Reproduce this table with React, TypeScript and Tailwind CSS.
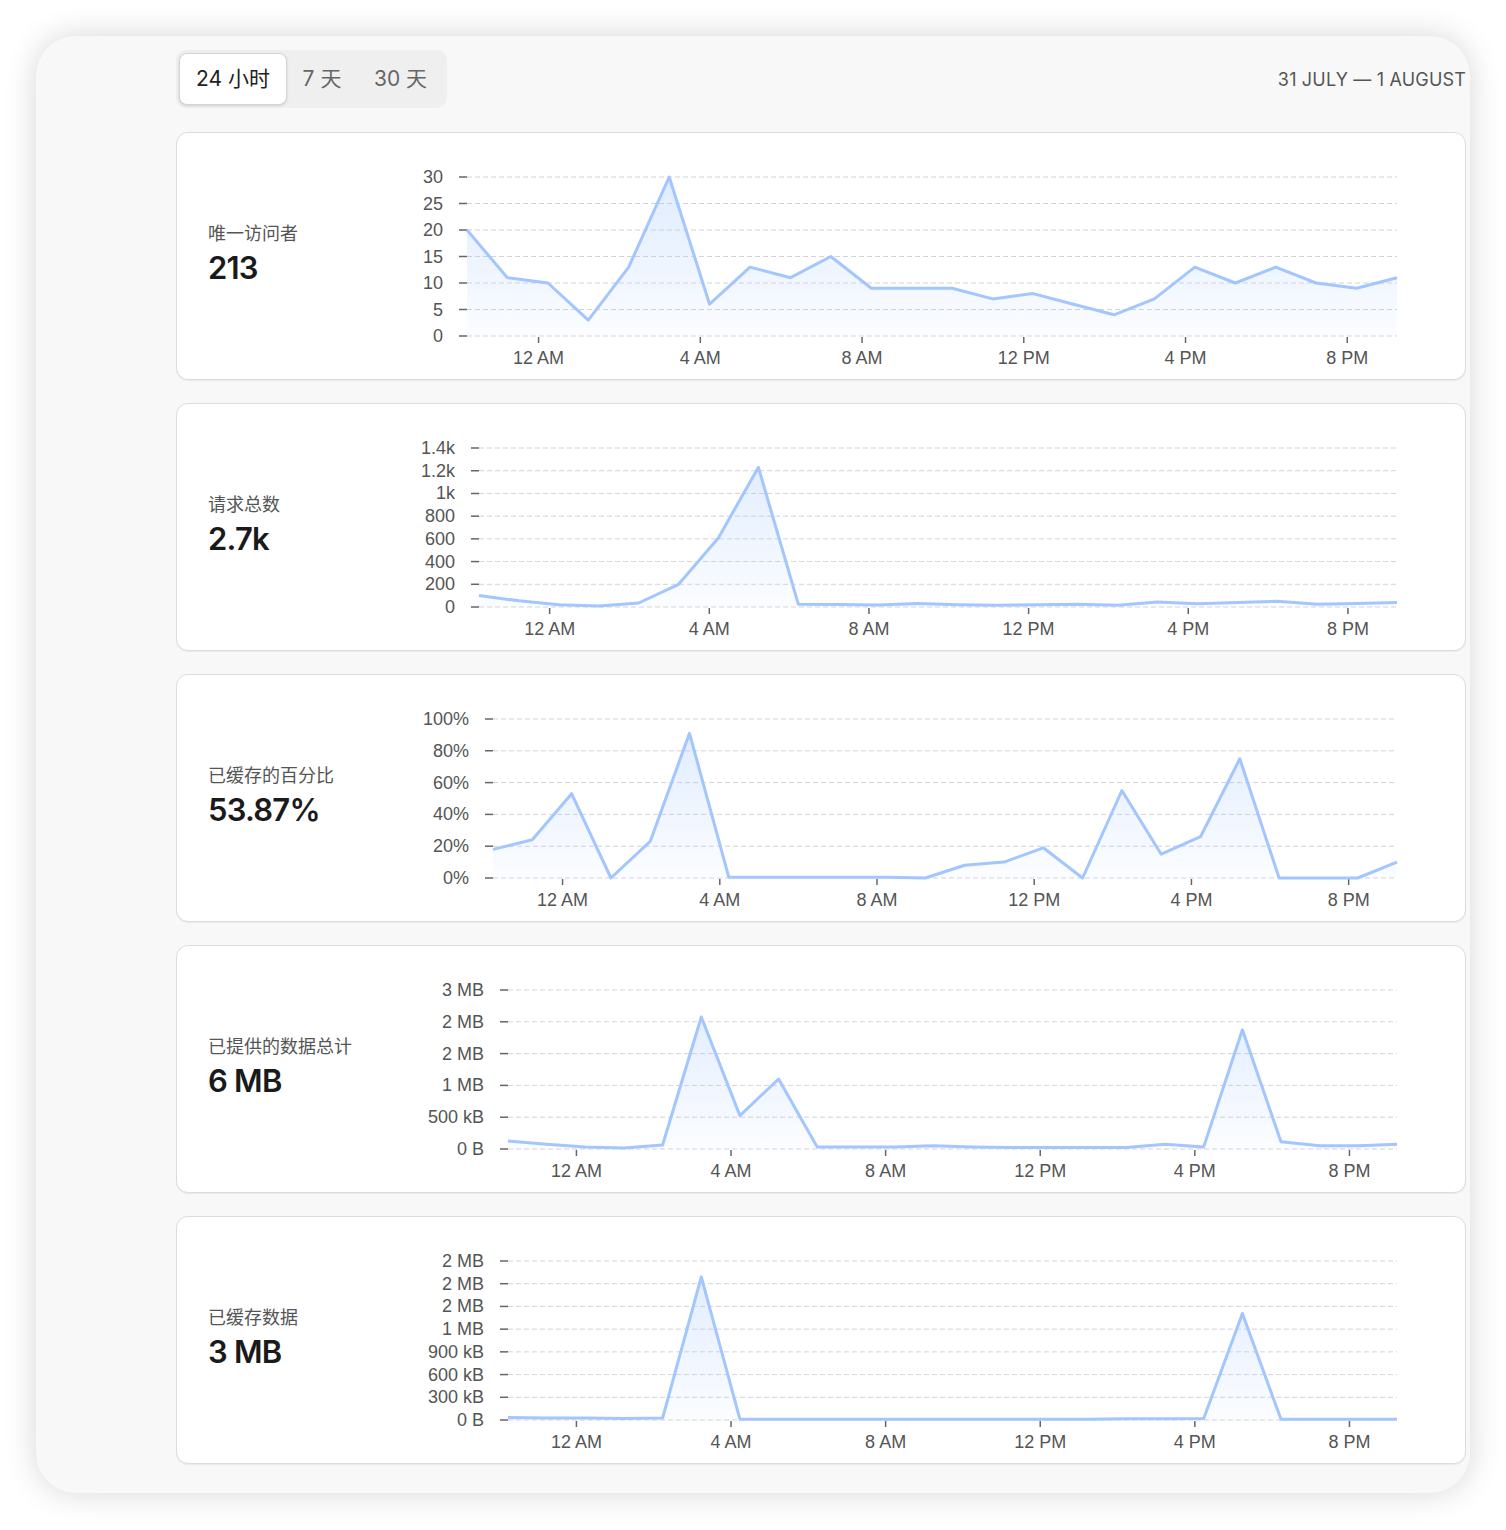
import React from "react";

type Metric = {
    label: string;
    value: string;
    plotLeft: number;
    yLabels: string[];
    data: number[];
    max: number;
};

const metrics: Metric[] = [
    {
        label: "唯一访问者",
        value: "213",
        plotLeft: 67,
        yLabels: ["30", "25", "20", "15", "10", "5", "0"],
        data: [20, 11, 10, 3, 13, 30, 6, 13, 11, 15, 9, 9, 9, 7, 8, 6, 4, 7, 13, 10, 13, 10, 9, 11],
        max: 30,
    },
    {
        label: "请求总数",
        value: "2.7k",
        plotLeft: 79,
        yLabels: ["1.4k", "1.2k", "1k", "800", "600", "400", "200", "0"],
        data: [100, 55, 20, 8, 35, 200, 610, 1230, 25, 22, 18, 30, 20, 15, 20, 25, 15, 45, 28, 40, 50, 25, 30, 40],
        max: 1400,
    },
    {
        label: "已缓存的百分比",
        value: "53.87%",
        plotLeft: 93,
        yLabels: ["100%", "80%", "60%", "40%", "20%", "0%"],
        data: [18, 24, 53, 0, 23, 91, 0.5, 0.5, 0.5, 0.5, 0.5, 0, 8, 10, 19, 0, 55, 15, 26, 75, 0, 0, 0, 10],
        max: 100,
    },
    {
        label: "已提供的数据总计",
        value: "6 MB",
        plotLeft: 108,
        yLabels: ["3 MB", "2 MB", "2 MB", "1 MB", "500 kB", "0 B"],
        data: [0.05, 0.03, 0.013, 0.006, 0.025, 0.83, 0.21, 0.44, 0.013, 0.013, 0.013, 0.02, 0.013, 0.01, 0.01, 0.01, 0.01, 0.03, 0.013, 0.75, 0.045, 0.02, 0.02, 0.03],
        max: 1,
    },
    {
        label: "已缓存数据",
        value: "3 MB",
        plotLeft: 108,
        yLabels: ["2 MB", "2 MB", "2 MB", "1 MB", "900 kB", "600 kB", "300 kB", "0 B"],
        data: [0.015, 0.012, 0.012, 0.01, 0.012, 0.9, 0.005, 0.005, 0.005, 0.005, 0.005, 0.005, 0.005, 0.005, 0.005, 0.005, 0.008, 0.008, 0.01, 0.67, 0.005, 0.005, 0.005, 0.005],
        max: 1,
    },
];

const xLabels = ["12 AM", "4 AM", "8 AM", "12 PM", "4 PM", "8 PM"];

const PLOT_RIGHT = 997;
const TOP = 44;
const BOTTOM = 203;

function Chart({ metric, id }: { metric: Metric; id: string }) {
    const { plotLeft, yLabels, data, max } = metric;
    const step = (PLOT_RIGHT - plotLeft) / (data.length - 1);
    const rowGap = (BOTTOM - TOP) / (yLabels.length - 1);

    const points = data.map((v, i) => {
        const x = plotLeft + i * step;
        const y = BOTTOM - (v / max) * (BOTTOM - TOP);
        return [x, y];
    });
    const line = points.map(([x, y], i) => `${i === 0 ? "M" : "L"}${x.toFixed(1)},${y.toFixed(1)}`).join(" ");
    const area = `${line} L${PLOT_RIGHT},${BOTTOM} L${plotLeft},${BOTTOM} Z`;

    return (
        <svg width="1065" height="246" className="shrink-0" style={{ fontFamily: "'Liberation Sans', Arial, sans-serif" }}>
            <defs>
                <linearGradient id={id} x1="0" y1={TOP} x2="0" y2={BOTTOM} gradientUnits="userSpaceOnUse">
                    <stop offset="0" stopColor="#a2c6fd" stopOpacity="0.35" />
                    <stop offset="1" stopColor="#a2c6fd" stopOpacity="0.04" />
                </linearGradient>
            </defs>

            {/* grid + y axis */}
            {yLabels.map((label, i) => {
                const y = TOP + i * rowGap;
                return (
                    <g key={i}>
                        <line x1={plotLeft} x2={PLOT_RIGHT} y1={y} y2={y} stroke="#d3d3d8" strokeWidth="1" strokeDasharray="5 3" />
                        <line x1={plotLeft - 8} x2={plotLeft} y1={y} y2={y} stroke="#666" strokeWidth="1.5" />
                        <text x={plotLeft - 24} y={y} textAnchor="end" dominantBaseline="central" fontSize="18" fill="#555">
                            {label}
                        </text>
                    </g>
                );
            })}

            {/* x axis */}
            {xLabels.map((label, i) => {
                const x = plotLeft + (1.77 + i * 4) * step;
                return (
                    <g key={label}>
                        <line x1={x} x2={x} y1={BOTTOM + 1} y2={BOTTOM + 7} stroke="#666" strokeWidth="1.5" />
                        <text x={x} y={BOTTOM + 22} textAnchor="middle" dominantBaseline="central" fontSize="18" fill="#555">
                            {label}
                        </text>
                    </g>
                );
            })}

            <path d={area} fill={`url(#${id})`} />
            <path d={line} fill="none" stroke="#a2c6fd" strokeWidth="3" strokeLinejoin="round" />
        </svg>
    );
}

function MetricCard({ metric, index }: { metric: Metric; index: number }) {
    return (
        <div className="flex h-[248px] overflow-hidden rounded-xl border border-[#dcdcdc] bg-white shadow-[0_1px_1px_rgba(0,0,0,0.06)]">
            <div className="w-[223px] shrink-0 pl-[31px] pt-[89px]">
                <p className="text-[18px] leading-6 text-[#555]">{metric.label}</p>
                <p className="mt-1 text-[31px] font-semibold leading-9 tracking-tight text-[#1a1a1a]">{metric.value}</p>
            </div>
            <Chart metric={metric} id={`fill-${index}`} />
        </div>
    );
}

const tabs = [
    { label: "24 小时", width: "w-[108px]" },
    { label: "7 天", width: "w-[70px]" },
    { label: "30 天", width: "w-[87px]" },
];

export default function App() {
    return (
        <div
            className="min-h-screen bg-white p-9"
            style={{ fontFamily: "Inter, 'Noto Sans CJK SC', sans-serif" }}
        >
            <div className="rounded-[40px] bg-[#f8f8f8] pb-[29px] pl-[140px] pr-1 pt-[14px] shadow-[0_0_32px_rgba(0,0,0,0.16)]">
                <div className="flex items-center justify-between">
                    <div className="flex rounded-[10px] bg-[#efefef] p-[3px]">
                        {tabs.map((tab, i) => (
                            <button
                                key={tab.label}
                                className={`h-[52px] ${tab.width} rounded-lg text-[21px] ${
                                    i === 0
                                        ? "border border-[#d4d4d4] bg-white text-[#222] shadow-sm"
                                        : "border border-transparent text-[#666]"
                                }`}
                            >
                                {tab.label}
                            </button>
                        ))}
                    </div>
                    <span className="text-[18px] tracking-[0.01em] text-[#555]">31 JULY — 1 AUGUST</span>
                </div>

                <div className="mt-6 flex flex-col gap-[23px]">
                    {metrics.map((m, i) => (
                        <MetricCard key={m.label} metric={m} index={i} />
                    ))}
                </div>
            </div>
        </div>
    );
}
